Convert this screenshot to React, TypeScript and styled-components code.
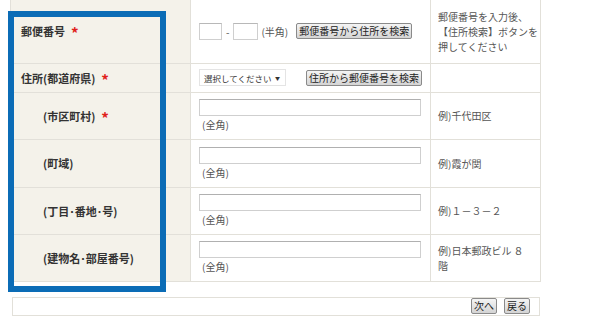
import styled, { createGlobalStyle } from "styled-components";

const GlobalStyle = createGlobalStyle`
    html, body {
        margin: 0;
        padding: 0;
        background: #ffffff;
    }
    body {
        font-family: "Noto Sans CJK JP", "Noto Sans", sans-serif;
        color: #333;
    }
`;

type Row = {
    label: string;
    sub?: boolean;
    required?: boolean;
    height: number;
    kind: "zip" | "pref" | "text";
    note: string[];
};

const rows: Row[] = [
    {
        label: "郵便番号",
        required: true,
        height: 63,
        kind: "zip",
        note: ["郵便番号を入力後、", "【住所検索】ボタンを", "押してください"],
    },
    { label: "住所(都道府県)", required: true, height: 29, kind: "pref", note: [] },
    { label: "(市区町村)", sub: true, required: true, height: 47, kind: "text", note: ["例)千代田区"] },
    { label: "(町域)", sub: true, height: 48, kind: "text", note: ["例)霞が関"] },
    { label: "(丁目･番地･号)", sub: true, height: 47, kind: "text", note: ["例)１－３－２"] },
    { label: "(建物名･部屋番号)", sub: true, height: 47, kind: "text", note: ["例)日本郵政ビル ８", "階"] },
];

const App = () => {
    return (
        <Page>
            <GlobalStyle />
            <FormTable>
                <colgroup>
                    <col style={{ width: 180 }} />
                    <col style={{ width: 240 }} />
                    <col style={{ width: 110 }} />
                </colgroup>
                <tbody>
                    {rows.map((row) => (
                        <tr key={row.label} style={{ height: row.height }}>
                            <LabelCell $sub={row.sub}>
                                {row.label}
                                {row.required && <Required>*</Required>}
                            </LabelCell>
                            <InputCell>
                                {row.kind === "zip" && (
                                    <Inline>
                                        <SmallInput $w={23} />
                                        <Dash>-</Dash>
                                        <SmallInput $w={25} />
                                        <Hint $gap={8}>(半角)</Hint>
                                        <GrayButton>郵便番号から住所を検索</GrayButton>
                                    </Inline>
                                )}
                                {row.kind === "pref" && (
                                    <Inline>
                                        <SelectBox>
                                            <span>選択してください</span>
                                            <Arrow>▼</Arrow>
                                        </SelectBox>
                                        <GrayButton>住所から郵便番号を検索</GrayButton>
                                    </Inline>
                                )}
                                {row.kind === "text" && (
                                    <Stack>
                                        <WideInput />
                                        <Hint>(全角)</Hint>
                                    </Stack>
                                )}
                            </InputCell>
                            <NoteCell>
                                {row.note.map((line) => (
                                    <div key={line}>{line}</div>
                                ))}
                            </NoteCell>
                        </tr>
                    ))}
                </tbody>
            </FormTable>

            <Footer>
                <GrayButton>次へ</GrayButton>
                <GrayButton>戻る</GrayButton>
            </Footer>

            <Highlight />
        </Page>
    );
};

export default App;

const Page = styled.div`
    position: relative;
    width: 598px;
    height: 321px;
    padding-left: 10px;
    box-sizing: border-box;
    overflow: hidden;
`;

const FormTable = styled.table`
    width: 530px;
    border-collapse: collapse;
    table-layout: fixed;
    font-size: 10px;

    td {
        box-sizing: border-box;
        border: 1px solid #e2e0d9;
        border-top: none;
        padding: 0;
    }
`;

const LabelCell = styled.td<{ $sub?: boolean }>`
    background: #f4f2ea;
    font-size: 11px;
    font-weight: 700;
    color: #333;
    vertical-align: middle;
    padding-left: ${(p) => (p.$sub ? "32px" : "10px")} !important;
    white-space: nowrap;
`;

const Required = styled.span`
    color: #e0211b;
    font-size: 15px;
    margin-left: 6px;
    position: relative;
    top: 3px;
    line-height: 0;
`;

const InputCell = styled.td`
    background: #ffffff;
    vertical-align: middle;
    padding-left: 8px !important;
`;

const NoteCell = styled.td`
    background: #ffffff;
    vertical-align: middle;
    padding-left: 7px !important;
    color: #555;
    font-size: 10px;
    line-height: 15px;
    white-space: nowrap;
`;

const Inline = styled.div`
    display: flex;
    align-items: center;
`;

const Stack = styled.div`
    display: flex;
    flex-direction: column;
    align-items: flex-start;
    gap: 1px;
`;

const SmallInput = styled.div<{ $w: number }>`
    width: ${(p) => p.$w}px;
    height: 17px;
    box-sizing: border-box;
    border: 1px solid #cfcfcf;
    border-top-color: #b8b8b8;
    background: #fff;
`;

const WideInput = styled.div`
    width: 222px;
    height: 17px;
    box-sizing: border-box;
    border: 1px solid #cfcfcf;
    border-top-color: #b0b0b0;
    background: #fff;
`;

const Dash = styled.span`
    color: #555;
    margin: 0 4px;
    font-size: 10px;
`;

const Hint = styled.span<{ $gap?: number }>`
    color: #555;
    font-size: 10px;
    margin: 0 ${(p) => p.$gap ?? 0}px 0 3px;
    white-space: nowrap;
`;

const GrayButton = styled.button`
    font-family: "Noto Sans CJK JP", sans-serif;
    font-size: 10px;
    color: #222;
    height: 16px;
    padding: 0 2px;
    line-height: 14px;
    border: 1px solid #8a8a8a;
    border-radius: 2px;
    background: linear-gradient(#f4f4f4, #d4d4d4);
    white-space: nowrap;
    cursor: pointer;
`;

const SelectBox = styled.div`
    display: flex;
    align-items: center;
    justify-content: space-between;
    width: 87px;
    height: 17px;
    box-sizing: border-box;
    padding: 0 5px 0 4px;
    margin-right: 20px;
    border: 1px solid #e4e4e4;
    background: #fff;
    color: #333;
    font-size: 8.5px;
    white-space: nowrap;
`;

const Arrow = styled.span`
    font-size: 5px;
    color: #333;
`;

const Footer = styled.div`
    display: flex;
    justify-content: flex-end;
    align-items: center;
    gap: 7px;
    width: 528px;
    height: 19px;
    margin: 15px 0 0 2px;
    padding-right: 9px;
    box-sizing: border-box;
    border: 1px solid #e2e0d9;
`;

const Highlight = styled.div`
    position: absolute;
    left: 8px;
    top: 11px;
    width: 158px;
    height: 281px;
    box-sizing: border-box;
    border: 6px solid #0b6cb6;
    pointer-events: none;
`;
